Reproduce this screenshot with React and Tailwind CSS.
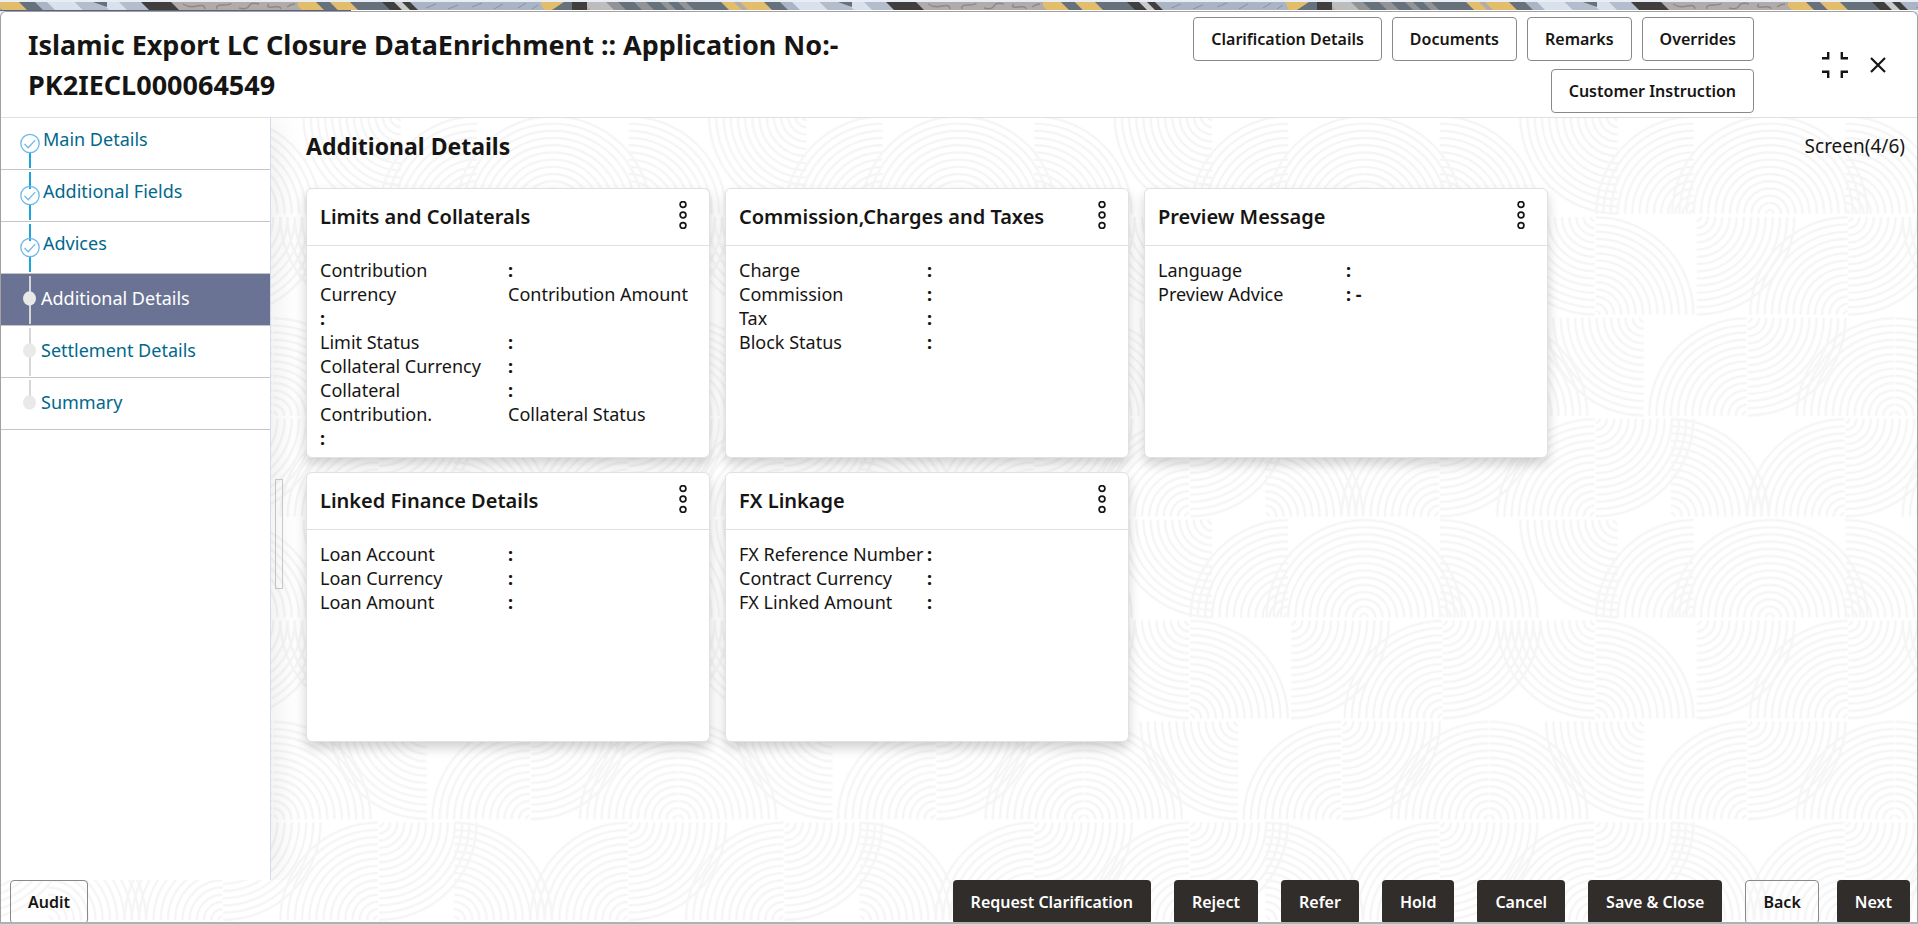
import { Fragment } from 'react';

const headerActions = ['Clarification Details', 'Documents', 'Remarks', 'Overrides', 'Customer Instruction'];

const footerActions = ['Request Clarification', 'Reject', 'Refer', 'Hold', 'Cancel', 'Save & Close'];

const steps = [
    { label: 'Main Details', status: 'done' },
    { label: 'Additional Fields', status: 'done' },
    { label: 'Advices', status: 'done' },
    { label: 'Additional Details', status: 'current' },
    { label: 'Settlement Details', status: 'todo' },
    { label: 'Summary', status: 'todo' },
];

const cards = [
    {
        title: 'Limits and Collaterals',
        rows: [
            ['Contribution', ':'],
            ['Currency', 'Contribution Amount'],
            [':', ''],
            ['Limit Status', ':'],
            ['Collateral Currency', ':'],
            ['Collateral', ':'],
            ['Contribution.', 'Collateral Status'],
            [':', ''],
        ],
    },
    {
        title: 'Commission,Charges and Taxes',
        rows: [['Charge', ':'], ['Commission', ':'], ['Tax', ':'], ['Block Status', ':']],
    },
    {
        title: 'Preview Message',
        rows: [['Language', ':'], ['Preview Advice', ': -']],
    },
    {
        title: 'Linked Finance Details',
        rows: [['Loan Account', ':'], ['Loan Currency', ':'], ['Loan Amount', ':']],
    },
    {
        title: 'FX Linkage',
        rows: [['FX Reference Number', ':'], ['Contract Currency', ':'], ['FX Linked Amount', ':']],
    },
];

// Quarter fans of the backdrop: centre x, row, and the corner the centre sits in
const fans = [
    [0, 0, 'bl'], [178, 0, 'tr'], [254, 0, 'br'], [330, 0, 'br'], [330, 0, 'bl'],
    [3, 1, 'tl'], [408, 1, 'br'], [155, 1, 'tr'], [156, 1, 'bl'], [257, 1, 'tl'],
    [49, 2, 'br'], [50, 2, 'bl'], [204, 2, 'tr'], [307, 2, 'br'], [308, 2, 'tl'],
    [0, 3, 'tl'], [405, 3, 'br'], [155, 3, 'br'], [156, 3, 'tl'], [231, 3, 'bl'],
];

const TILE_W = 405.6;
const ROW_H = 100.9;
const radii = Array.from({ length: 14 }, (_, i) => 4 + i * 7.2);

function fanPath(x, row, corner) {
    const atTop = corner[0] === 't';
    const y = row * ROW_H + (atTop ? 1 : 99);
    const dx = corner[1] === 'l' ? 1 : -1;
    const dy = atTop ? 1 : -1;
    const sweep = dx * dy > 0 ? 1 : 0;
    return radii
        .map(r => `M${x + dx * r} ${y}A${r} ${r} 0 0 ${sweep} ${x} ${y + dy * r}`)
        .join('');
}

const Backdrop = () => (
    <svg className="absolute inset-0 w-full h-full pointer-events-none" aria-hidden="true">
        <defs>
            <pattern id="fans" x="222" y="-3" width={TILE_W} height={ROW_H * 4} patternUnits="userSpaceOnUse">
                {[-TILE_W, 0, TILE_W].map(shift => (
                    <g key={shift} transform={`translate(${shift} 0)`} fill="none" stroke="#f5f5f5" strokeWidth="2.4">
                        {fans.map(([x, row, corner], i) => (
                            <path key={i} d={fanPath(x, row, corner)} />
                        ))}
                    </g>
                ))}
            </pattern>
        </defs>
        <rect width="100%" height="100%" fill="url(#fans)" />
    </svg>
);

// Decorative fabric strip above the panel
const fabric = [
    [0, 22, '#e2bd6b'], [22, 14, '#66717b'], [36, 20, '#e2bd6b'], [56, 34, '#66717b'],
    [88, 40, '#403f3e'], [100, 8, '#c9cacc'], [116, 133, '#a9b4c5'], [289, 24, '#bdbdbe'],
    [312, 82, '#929397'], [324, 16, '#66717b'], [352, 14, '#66717b'], [374, 10, '#66717b'],
    [392, 40, '#66717b'], [427, 13, '#e2bd6b'], [446, 24, '#e2bd6b'], [470, 20, '#66717b'],
    [486, 22, '#a9b4c5'], [498, 28, '#d9e1ec'], [526, 30, '#b3bdcc'], [552, 22, '#d9e1ec'],
    [570, 24, '#b3bdcc'], [592, 30, '#403f3e'],
];

const FabricStrip = () => (
    <svg className="block w-full h-2" aria-hidden="true">
        <defs>
            <pattern id="fabric" x="298" width="745" height="8" patternUnits="userSpaceOnUse">
                <rect width="745" height="8" fill="#b1acaa" />
                <path d="M124 0h125v8h-121z" fill="#a9b4c5" />
                {fabric.map(([x, w, color]) => (
                    <path key={x} d={`M${x - 4} 0h${w}l8 8h-${w}z`} fill={color} />
                ))}
                <path d="M242 0h24l-12 8h-8z" fill="#e2bd6b" />
                <path d="M266 0h10v8h-22z" fill="#66717b" />
                <path d="M274 0h15v8h-15z" fill="#403f3e" />
                <path d="M540 0h14v5z" fill="#66717b" />
                <path
                    d="M128 6l10-4M150 7l10-4M174 5l10-4M196 7l9-5M220 6l8-5M234 7l6-4"
                    stroke="#8b929c"
                    fill="none"
                />
                <path
                    d="M630 2q6 4 14 2t8 3M664 7q-2-4 6-4t8-2M686 6q8 2 10-2t10-2M716 2q-4 4 4 3t8 2M734 5q4-3 8-3"
                    stroke="#8d8988"
                    strokeWidth="1.5"
                    fill="none"
                />
            </pattern>
        </defs>
        <rect width="100%" height="8" fill="url(#fabric)" />
    </svg>
);

const CollapseIcon = () => (
    <svg className="w-[26px] h-[26px]" viewBox="0 0 26 26" fill="none" stroke="#161513" strokeWidth="2.4">
        <path d="M0 6.2h6.2V0M19.8 0v6.2H26M0 19.8h6.2V26M26 19.8h-6.2V26" />
    </svg>
);

const CloseIcon = () => (
    <svg className="w-4 h-4" viewBox="0 0 16 16" fill="none" stroke="#161513" strokeWidth="2.2">
        <path d="M1 1l14 14M15 1L1 15" />
    </svg>
);

const KebabIcon = () => (
    <svg className="w-2 h-7" viewBox="0 0 8 28" fill="none" stroke="#161513" strokeWidth="1.7">
        <circle cx="4" cy="3.5" r="2.9" />
        <circle cx="4" cy="14" r="2.9" />
        <circle cx="4" cy="24.5" r="2.9" />
    </svg>
);

function StepMarker({ status, first, last }) {
    if (status === 'done') {
        return (
            <svg className="w-5 h-[51px] shrink-0" viewBox="0 0 20 51" fill="none">
                {!first && <path d="M10 2v17" stroke="#1aa5dc" strokeWidth="2" />}
                <path d="M10 35v15" stroke="#1aa5dc" strokeWidth="2" />
                <circle cx="10" cy="25.5" r="9.2" stroke="#6fb8ea" strokeWidth="1.3" />
                <path d="M4.5 26l3.7 3.7 7-7.6" stroke="#6fb8ea" strokeWidth="1.3" />
            </svg>
        );
    }
    return (
        <svg className="w-5 h-[51px] shrink-0" viewBox="0 0 20 51">
            <path d={last ? 'M10 2v17' : 'M10 2v48'} stroke="#d6d6d6" strokeWidth="2" />
            <ellipse cx="9.5" cy="24.5" rx="6.5" ry="7.2" fill="#e9e9e9" />
        </svg>
    );
}

function OutlineButton({ children }) {
    return (
        <button
            type="button"
            className="h-11 px-[17px] rounded border border-[#8b8987] text-base font-semibold whitespace-nowrap"
        >
            {children}
        </button>
    );
}

function DarkButton({ children }) {
    return (
        <button
            type="button"
            className="h-11 px-[18px] rounded bg-[#312d2a] text-white text-base font-semibold whitespace-nowrap"
        >
            {children}
        </button>
    );
}

function DataCard({ title, rows }) {
    return (
        <section className="h-[270px] bg-white rounded-md border border-[#e3e1df] shadow-[0_6px_12px_rgba(0,0,0,0.18)]">
            <div className="flex items-center justify-between h-[57px] pl-[13px] pr-[22px] border-b border-[#e3e1df]">
                <h3 className="text-xl font-semibold">{title}</h3>
                <button type="button" aria-label={`${title} menu`} className="pb-1">
                    <KebabIcon />
                </button>
            </div>
            <dl className="grid grid-cols-[188px_1fr] pl-[13px] pt-3 text-lg leading-6 whitespace-nowrap">
                {rows.map(([label, value], i) => (
                    <Fragment key={i}>
                        <dt className={label === ':' ? 'font-bold' : ''}>{label}</dt>
                        <dd className={value.startsWith(':') ? 'font-bold' : ''}>{value}</dd>
                    </Fragment>
                ))}
            </dl>
        </section>
    );
}

export default function App() {
    return (
        <div className="h-screen flex flex-col overflow-hidden bg-[#e8edf6] text-[#161513] font-['Noto_Sans',sans-serif]">
            <div className="pt-[2px]">
                <FabricStrip />
                <div className="h-px bg-white">
                    <div className="h-px w-[351px] bg-[#596187]"></div>
                </div>
            </div>

            <div className="flex-1 min-h-0 flex flex-col bg-white border border-b-0 border-[#a3a1a0] rounded-t-md overflow-hidden">
                {/* Header */}
                <header className="flex items-start border-b border-[#e0e0e0] h-[106px] pl-[27px] pr-[31px]">
                    <h1 className="flex-1 max-w-[900px] pt-[13px] text-[27px] leading-10 font-bold">
                        Islamic Export LC Closure DataEnrichment :: Application No:- PK2IECL000064549
                    </h1>
                    <div className="ml-auto w-[600px] pt-[5px] flex flex-wrap justify-end gap-x-[10px] gap-y-2">
                        {headerActions.map(label => (
                            <OutlineButton key={label}>{label}</OutlineButton>
                        ))}
                    </div>
                    <div className="flex items-center gap-[22px] h-[105px] ml-[68px]">
                        <button type="button" aria-label="Collapse"><CollapseIcon /></button>
                        <button type="button" aria-label="Close"><CloseIcon /></button>
                    </div>
                </header>

                <div className="relative flex-1 min-h-0 flex flex-col">
                    <Backdrop />

                    <div className="relative flex-1 min-h-0 flex">
                        {/* Steps */}
                        <nav className="w-[270px] shrink-0 bg-white border-r border-[#d3dcec] shadow-[4px_0_30px_rgba(0,0,0,0.08)] [clip-path:inset(0_-40px_0_0)]">
                            <ol>
                                {steps.map((step, i) => (
                                    <li
                                        key={step.label}
                                        className={`border-b border-[#c4c4c4] ${step.status === 'current' ? 'bg-[#6b7394]' : ''}`}
                                    >
                                        <a
                                            href="#"
                                            aria-current={step.status === 'current' ? 'step' : undefined}
                                            className={`flex pl-[19px] text-lg leading-6 ${step.status === 'current' ? 'text-white' : 'text-[#00688c]'}`}
                                        >
                                            <StepMarker status={step.status} first={i === 0} last={i === steps.length - 1} />
                                            <span className={step.status === 'done' ? 'pl-[3px] pt-[9px]' : 'pl-px pt-3'}>
                                                {step.label}
                                            </span>
                                        </a>
                                    </li>
                                ))}
                            </ol>
                        </nav>

                        <div className="flex items-center pt-[70px] pl-1">
                            <div className="w-2 h-[110px] border border-[#cccccc]"></div>
                        </div>

                        {/* Content */}
                        <main className="flex-1 pl-[23px] pr-3">
                            <div className="flex justify-between h-[70px] pt-[14px]">
                                <h2 className="text-[23px] leading-7 font-bold">Additional Details</h2>
                                <span className="text-[19px] leading-7">Screen(4/6)</span>
                            </div>
                            <div className="grid grid-cols-[repeat(auto-fill,404px)] gap-x-[15px] gap-y-[14px]">
                                {cards.map(card => (
                                    <DataCard key={card.title} title={card.title} rows={card.rows} />
                                ))}
                            </div>
                        </main>
                    </div>

                    {/* Footer */}
                    <footer className="relative flex justify-between h-[42px] overflow-hidden pl-[9px] pr-[7px]">
                        <OutlineButton>Audit</OutlineButton>
                        <div className="flex gap-[23px]">
                            {footerActions.map(label => (
                                <DarkButton key={label}>{label}</DarkButton>
                            ))}
                            <div className="flex gap-[18px]">
                                <OutlineButton>Back</OutlineButton>
                                <DarkButton>Next</DarkButton>
                            </div>
                        </div>
                    </footer>
                </div>
            </div>
            <div className="h-[3px] bg-[#d9d7d7] border-t-2 border-[#b5b0b0]"></div>
        </div>
    );
}
